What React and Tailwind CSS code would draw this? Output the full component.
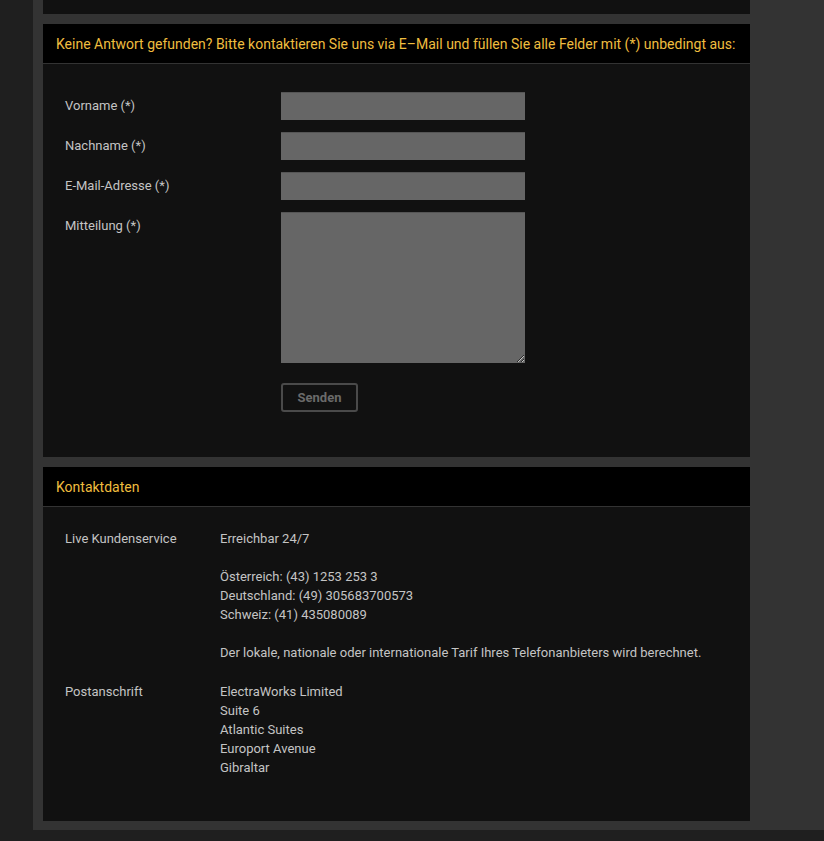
import React from 'react';

const fields = [
  { id: 'vorname', label: 'Vorname (*)' },
  { id: 'nachname', label: 'Nachname (*)' },
  { id: 'email', label: 'E-Mail-Adresse (*)' },
];

const Panel = ({ title, children }) => (
  <div className="bg-[#111111] w-[707px]">
    <div className="h-[40px] bg-black border-b border-[#333333] flex items-center pl-[13px] pt-[1px]">
      <h2 className="text-[14px] text-[#efbd3f]">{title}</h2>
    </div>
    {children}
  </div>
);

export default function App() {
  return (
    <div className="min-h-[841px] bg-[#1f1f1f] font-['Roboto',sans-serif] overflow-hidden">
      <div className="ml-[33px] bg-[#333333] pl-[10px] pb-[9px] flex flex-col gap-[10px]">
        <div className="h-[14px] w-[707px] bg-[#111111]" />

        <Panel title="Keine Antwort gefunden? Bitte kontaktieren Sie uns via E–Mail und füllen Sie alle Felder mit (*) unbedingt aus:">
          <form className="pt-[28px] pb-[45px] pl-[22px] flex flex-col gap-[12px]">
            {fields.map((f) => (
              <div key={f.id} className="flex items-center">
                <label htmlFor={f.id} className="w-[216px] text-[13px] text-[#c4c4c4]">
                  {f.label}
                </label>
                <input
                  id={f.id}
                  type="text"
                  className="w-[244px] h-[28px] bg-[#666666] border-t border-[#555555] outline-none"
                />
              </div>
            ))}
            <div className="flex items-start">
              <label htmlFor="msg" className="w-[216px] text-[13px] text-[#c4c4c4] pt-[4px]">
                Mitteilung (*)
              </label>
              <textarea
                id="msg"
                className="w-[244px] h-[151px] bg-[#666666] border-t border-[#555555] outline-none block"
              />
            </div>
            <div className="flex pl-[216px] pt-[8px]">
              <button
                type="button"
                className="w-[77px] h-[29px] border-2 border-[#4a4a4a] rounded-[3px] text-[13px] font-bold text-[#6a6a6a]"
              >
                Senden
              </button>
            </div>
          </form>
        </Panel>

        <Panel title="Kontaktdaten">
          <div className="pt-[22px] pb-[44px] pl-[22px] text-[13px] leading-[19px] text-[#c4c4c4]">
            <div className="flex">
              <div className="w-[155px]">Live Kundenservice</div>
              <div>
                <p>Erreichbar 24/7</p>
                <p className="mt-[19px]">Österreich: (43) 1253 253 3</p>
                <p>Deutschland: (49) 305683700573</p>
                <p>Schweiz: (41) 435080089</p>
                <p className="mt-[19px]">
                  Der lokale, nationale oder internationale Tarif Ihres Telefonanbieters wird berechnet.
                </p>
              </div>
            </div>
            <div className="flex mt-[20px]">
              <div className="w-[155px]">Postanschrift</div>
              <div>
                <p>ElectraWorks Limited</p>
                <p>Suite 6</p>
                <p>Atlantic Suites</p>
                <p>Europort Avenue</p>
                <p>Gibraltar</p>
              </div>
            </div>
          </div>
        </Panel>
      </div>
    </div>
  );
}
